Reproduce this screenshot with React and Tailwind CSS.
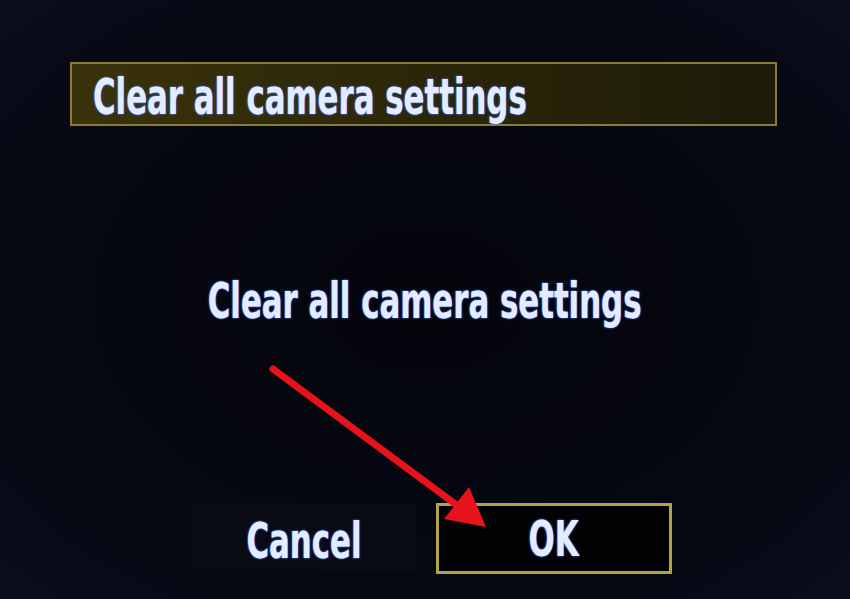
import React from 'react';

const screenText = 'inline-block font-["DejaVu_Sans_Condensed","DejaVu_Sans",sans-serif] font-bold text-[#e4ecff] [text-shadow:0_0_3px_#3f6cff,0_0_1px_#9fb8ff] leading-none whitespace-nowrap scale-x-[0.685]';

// red annotation arrow drawn over the screen
const Arrow = () => (
    <svg className="absolute inset-0 pointer-events-none" width="850" height="599" viewBox="0 0 850 599">
        <line x1="273" y1="369" x2="458" y2="506" stroke="#e8121a" strokeWidth="7" strokeLinecap="round" />
        <polygon points="486,527 444,519 469,487" fill="#e8121a" />
    </svg>
);

export default function App() {
    return (
        <div className="relative w-[850px] h-[599px] overflow-hidden bg-[#05070f] bg-[radial-gradient(ellipse_at_center,#04050b_0%,#060813_70%,#0a0e1c_100%)]">
            <div className="flex flex-col h-full">
                {/* header row */}
                <div className="ml-[70px] mt-[62px] w-[707px] h-[64px] border-2 border-[#8a7d32] bg-[linear-gradient(90deg,#3a320a_0%,#2a2508_55%,#1d1b09_100%)] flex items-center pl-[21px] pt-[6px]">
                    <span className={`${screenText} origin-left text-[50px]`}>Clear all camera settings</span>
                </div>

                {/* message */}
                <div className="mt-[150px] flex justify-center">
                    <span className={`${screenText} origin-center text-[50px]`}>Clear all camera settings</span>
                </div>

                {/* buttons */}
                <div className="mt-auto mb-[25px] flex gap-[20px] pl-[192px]">
                    <div className="w-[224px] h-[70px] flex items-center justify-center bg-[#080a14] pt-[6px]">
                        <span className={`${screenText} origin-center text-[50px]`}>Cancel</span>
                    </div>
                    <div className="w-[236px] h-[71px] border-[3px] border-[#b3a443] bg-[#020204] flex items-center justify-center">
                        <span className={`${screenText} origin-center text-[50px]`}>OK</span>
                    </div>
                </div>
            </div>
            <Arrow />
        </div>
    );
}
